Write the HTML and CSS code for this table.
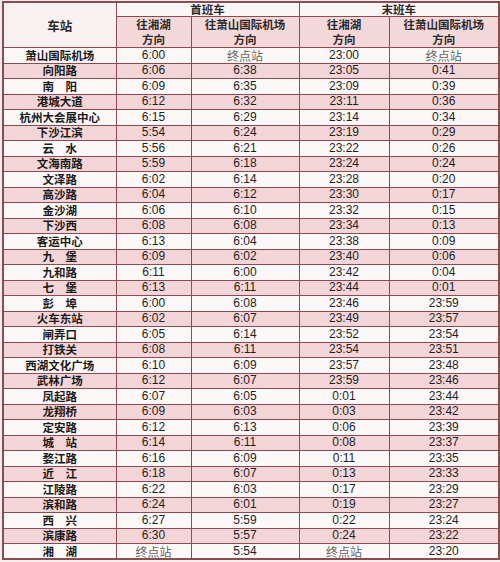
FILE: index.html
```html
<!DOCTYPE html>
<html lang="zh-CN">
<head>
<meta charset="utf-8">
<title>首末班车时刻表</title>
<link rel="stylesheet" href="styles.css">
</head>
<body>
<table class="tt">
<colgroup>
<col class="c1"><col class="c2"><col class="c3"><col class="c4"><col class="c5">
</colgroup>
<thead>
<tr class="h1">
<th class="st-h" rowspan="2">车站</th>
<th colspan="2">首班车</th>
<th colspan="2">末班车</th>
</tr>
<tr class="h2">
<th><span class="ln">往湘湖</span><span class="ln">方向</span></th>
<th><span class="ln">往萧山国际机场</span><span class="ln">方向</span></th>
<th><span class="ln">往湘湖</span><span class="ln">方向</span></th>
<th><span class="ln">往萧山国际机场</span><span class="ln">方向</span></th>
</tr>
</thead>
<tbody>
<tr><td class="st">萧山国际机场</td><td>6:00</td><td class="end">终点站</td><td>23:00</td><td class="end">终点站</td></tr>
<tr><td class="st">向阳路</td><td>6:06</td><td>6:38</td><td>23:05</td><td>0:41</td></tr>
<tr><td class="st">南　阳</td><td>6:09</td><td>6:35</td><td>23:09</td><td>0:39</td></tr>
<tr><td class="st">港城大道</td><td>6:12</td><td>6:32</td><td>23:11</td><td>0:36</td></tr>
<tr><td class="st">杭州大会展中心</td><td>6:15</td><td>6:29</td><td>23:14</td><td>0:34</td></tr>
<tr><td class="st">下沙江滨</td><td>5:54</td><td>6:24</td><td>23:19</td><td>0:29</td></tr>
<tr><td class="st">云　水</td><td>5:56</td><td>6:21</td><td>23:22</td><td>0:26</td></tr>
<tr><td class="st">文海南路</td><td>5:59</td><td>6:18</td><td>23:24</td><td>0:24</td></tr>
<tr><td class="st">文泽路</td><td>6:02</td><td>6:14</td><td>23:28</td><td>0:20</td></tr>
<tr><td class="st">高沙路</td><td>6:04</td><td>6:12</td><td>23:30</td><td>0:17</td></tr>
<tr><td class="st">金沙湖</td><td>6:06</td><td>6:10</td><td>23:32</td><td>0:15</td></tr>
<tr><td class="st">下沙西</td><td>6:08</td><td>6:08</td><td>23:34</td><td>0:13</td></tr>
<tr><td class="st">客运中心</td><td>6:13</td><td>6:04</td><td>23:38</td><td>0:09</td></tr>
<tr><td class="st">九　堡</td><td>6:09</td><td>6:02</td><td>23:40</td><td>0:06</td></tr>
<tr><td class="st">九和路</td><td>6:11</td><td>6:00</td><td>23:42</td><td>0:04</td></tr>
<tr><td class="st">七　堡</td><td>6:13</td><td>6:11</td><td>23:44</td><td>0:01</td></tr>
<tr><td class="st">彭　埠</td><td>6:00</td><td>6:08</td><td>23:46</td><td>23:59</td></tr>
<tr><td class="st">火车东站</td><td>6:02</td><td>6:07</td><td>23:49</td><td>23:57</td></tr>
<tr><td class="st">闸弄口</td><td>6:05</td><td>6:14</td><td>23:52</td><td>23:54</td></tr>
<tr><td class="st">打铁关</td><td>6:08</td><td>6:11</td><td>23:54</td><td>23:51</td></tr>
<tr><td class="st">西湖文化广场</td><td>6:10</td><td>6:09</td><td>23:57</td><td>23:48</td></tr>
<tr><td class="st">武林广场</td><td>6:12</td><td>6:07</td><td>23:59</td><td>23:46</td></tr>
<tr><td class="st">凤起路</td><td>6:07</td><td>6:05</td><td>0:01</td><td>23:44</td></tr>
<tr><td class="st">龙翔桥</td><td>6:09</td><td>6:03</td><td>0:03</td><td>23:42</td></tr>
<tr><td class="st">定安路</td><td>6:12</td><td>6:13</td><td>0:06</td><td>23:39</td></tr>
<tr><td class="st">城　站</td><td>6:14</td><td>6:11</td><td>0:08</td><td>23:37</td></tr>
<tr><td class="st">婺江路</td><td>6:16</td><td>6:09</td><td>0:11</td><td>23:35</td></tr>
<tr><td class="st">近　江</td><td>6:18</td><td>6:07</td><td>0:13</td><td>23:33</td></tr>
<tr><td class="st">江陵路</td><td>6:22</td><td>6:03</td><td>0:17</td><td>23:29</td></tr>
<tr><td class="st">滨和路</td><td>6:24</td><td>6:01</td><td>0:19</td><td>23:27</td></tr>
<tr><td class="st">西　兴</td><td>6:27</td><td>5:59</td><td>0:22</td><td>23:24</td></tr>
<tr><td class="st">滨康路</td><td>6:30</td><td>5:57</td><td>0:24</td><td>23:22</td></tr>
<tr><td class="st">湘　湖</td><td class="end">终点站</td><td>5:54</td><td class="end">终点站</td><td>23:20</td></tr>
</tbody>
</table>
</body>
</html>
```

FILE: styles.css
```css
html, body {
  margin: 0;
  padding: 0;
  background: #f6eeee;
}
body {
  padding: 1px 0 0 2px;
  width: 500px;
  height: 562px;
  box-sizing: border-box;
  overflow: hidden;
}
.tt {
  border-collapse: collapse;
  table-layout: fixed;
  width: 496px;
  font-family: "Liberation Sans", "Noto Sans CJK SC", sans-serif;
  font-size: 12px;
  color: #1e1e1e;
  border: 2px solid #8a4b52;
}
.c1 { width: 113px; }
.c2 { width: 75px; }
.c3 { width: 108px; }
.c4 { width: 90px; }
.c5 { width: 110px; }
.tt th, .tt td {
  border: 1.5px solid #8e4a52;
  padding: 0;
  text-align: center;
  vertical-align: middle;
  line-height: 13px;
  overflow: hidden;
  white-space: nowrap;
}
.tt th {
  font-family: "Noto Sans CJK SC", sans-serif;
  font-weight: 700;
  font-size: 11.5px;
  color: #2a2a2a;
}
.h1 th { height: 12px; background: #fbf6f6; }
.h2 th { height: 29px; background: #f3d7d9; }
.ln {
  display: block;
  height: 15px;
  line-height: 15px;
  overflow: hidden;
}
.h1 .st-h { background: #f8f1f1; font-size: 12.5px; }
.tt tbody tr { height: 15.5px; }
.tt tbody tr:nth-child(odd) td { background: #fcf8f8; }
.tt tbody tr:nth-child(even) td { background: #f3d5d7; }
.st {
  font-family: "Noto Sans CJK SC", sans-serif;
  font-weight: 700;
  font-size: 11.5px;
  color: #1a1a1a;
}
.end {
  font-family: "Noto Sans CJK SC", sans-serif;
  font-weight: 400;
  font-size: 12px;
  color: #666;
}
```
